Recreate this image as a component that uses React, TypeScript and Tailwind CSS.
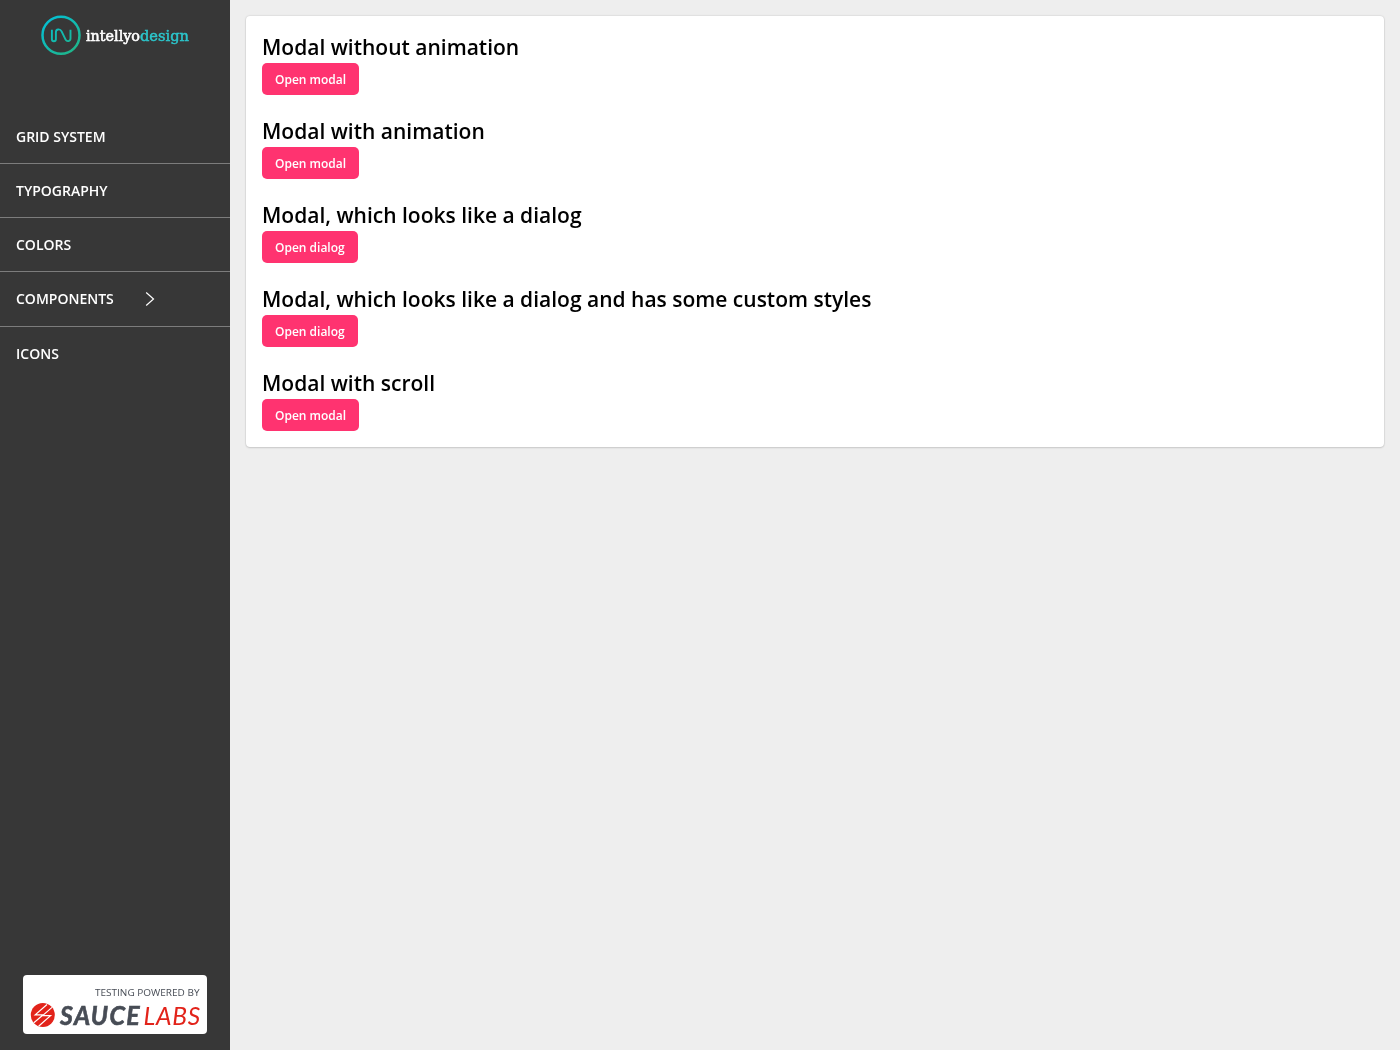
const navItems = [
  { label: 'GRID SYSTEM', height: 'h-[54px]' },
  { label: 'TYPOGRAPHY', height: 'h-[54px]' },
  { label: 'COLORS', height: 'h-[54px]' },
  { label: 'COMPONENTS', height: 'h-[55px]', expandable: true },
  { label: 'ICONS', height: 'h-[54px]' },
];

const examples = [
  { title: 'Modal without animation', action: 'Open modal' },
  { title: 'Modal with animation', action: 'Open modal' },
  { title: 'Modal, which looks like a dialog', action: 'Open dialog' },
  { title: 'Modal, which looks like a dialog and has some custom styles', action: 'Open dialog' },
  { title: 'Modal with scroll', action: 'Open modal' },
];

function BrandLogo() {
  return (
    <svg width="150" height="40" viewBox="0 0 150 40" className="block">
      <defs>
        <linearGradient id="ring" gradientUnits="userSpaceOnUse" x1="8" y1="4" x2="34" y2="36">
          <stop offset="0" stopColor="#05bfd2" />
          <stop offset="1" stopColor="#1fb58b" />
        </linearGradient>
      </defs>
      <circle cx="21" cy="20.2" r="18.5" fill="none" stroke="url(#ring)" strokeWidth="2.5" />
      <path
        d="M11.9 14.8V24.2Q11.9 26.3 13.9 26.3Q15.9 26.3 15.9 24.2V17.2C15.9 13.7 20.2 13.6 21.6 16.4L25.6 24.6C26.8 27 30.5 26.5 30.5 23.6V14.8"
        fill="none"
        stroke="url(#ring)"
        strokeWidth="1.9"
      />
      <text x="46" y="25.5" fontFamily="'DejaVu Serif', serif" fontSize="14.6" fill="#fff" stroke="#fff" strokeWidth="0.6" textLength="54" lengthAdjust="spacingAndGlyphs">
        intellyo
      </text>
      <text x="100" y="25.5" fontFamily="'DejaVu Serif', serif" fontSize="14.6" fill="#2cc5cb" stroke="#2cc5cb" strokeWidth="0.5" textLength="49" lengthAdjust="spacingAndGlyphs">
        design
      </text>
    </svg>
  );
}

function SauceBadge() {
  return (
    <div className="h-[59px] w-[184px] rounded bg-white">
      <svg width="184" height="59" viewBox="0 0 184 59" className="block">
        <text x="72" y="21" fontFamily="'Open Sans', sans-serif" fontSize="9.8" fill="#474c55" textLength="104.5" lengthAdjust="spacingAndGlyphs">
          TESTING POWERED BY
        </text>
        <circle cx="19.8" cy="40" r="12" fill="#e2231a" />
        <path
          d="M24 29.5L12.2 39.8H20.2L10.8 47.8M15.6 51.2L27.6 40.6H19.6L29 32.4"
          fill="none"
          stroke="#fff"
          strokeWidth="1.2"
        />
        <text x="37" y="50" fontFamily="Lato, sans-serif" fontSize="25.8" fontWeight="700" fontStyle="italic" fill="#474c55" stroke="#474c55" strokeWidth="0.6" letterSpacing="1.4" textLength="81" lengthAdjust="spacingAndGlyphs">
          SAUCE
        </text>
        <text x="120.5" y="50" fontFamily="Lato, sans-serif" fontSize="25.8" fontStyle="italic" fill="#e2231a" letterSpacing="0.8" textLength="57.5" lengthAdjust="spacingAndGlyphs">
          LABS
        </text>
      </svg>
    </div>
  );
}

export default function App() {
  return (
    <div className="flex h-screen bg-[#eeeeee] font-['Open_Sans','Noto_Sans',sans-serif] text-black">
      <aside className="flex w-[230px] shrink-0 flex-col bg-[#373737] text-white will-change-transform">
        <div className="flex h-[110px] justify-center pt-[15px]">
          <BrandLogo />
        </div>
        <nav>
          {navItems.map((item) => (
            <a
              key={item.label}
              href="#"
              className={`flex items-center border-b border-[#7c7c7c] pl-4 text-sm font-semibold last:border-b-0 ${item.height}`}
            >
              {item.label}
              {item.expandable && (
                <svg width="10" height="14" viewBox="0 0 10 14" className="ml-[31px]" fill="none" stroke="currentColor" strokeWidth="1.2">
                  <path d="M1.2 0.5L8.5 7L1.2 13.5" />
                </svg>
              )}
            </a>
          ))}
        </nav>
        <div className="mt-auto flex justify-center pb-4">
          <SauceBadge />
        </div>
      </aside>
      <main className="flex-1 p-4 will-change-transform">
        <section className="flex h-[431px] flex-col gap-5 rounded bg-white px-4 pt-[15px] shadow-[0_0_2px_rgba(0,0,0,0.2),0_1px_2px_rgba(0,0,0,0.12)]">
          {examples.map((example) => (
            <div key={example.title} className="flex h-16 flex-col items-start">
              <h2 className="h-8 text-[21px] leading-8 font-semibold whitespace-nowrap">{example.title}</h2>
              <button className="h-8 rounded-[5px] bg-[#ff3370] px-[13px] pt-px text-xs font-semibold text-white">
                {example.action}
              </button>
            </div>
          ))}
        </section>
      </main>
    </div>
  );
}
